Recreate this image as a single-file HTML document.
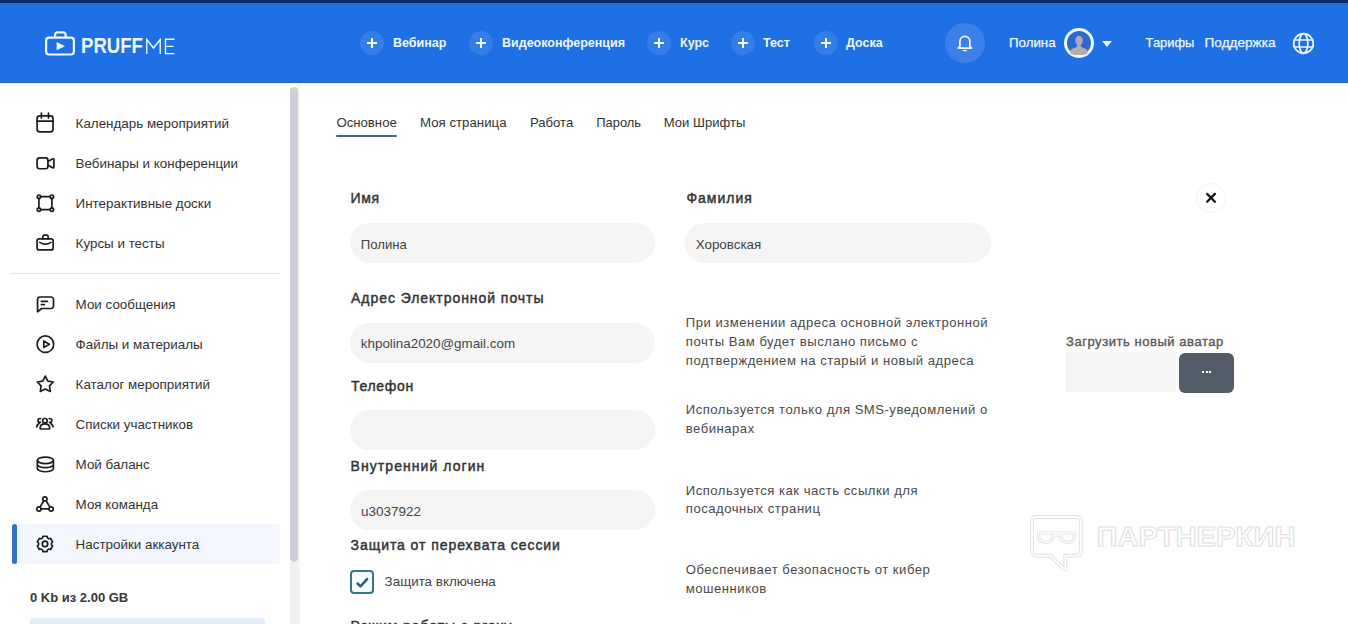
<!DOCTYPE html>
<html><head><meta charset="utf-8">
<style>
*{box-sizing:border-box;margin:0;padding:0}
html,body{width:1348px;height:624px;overflow:hidden;background:#fff;font-family:"Liberation Sans",sans-serif;color:#333}
.a{position:absolute;white-space:nowrap}
#topstrip{position:absolute;left:0;top:0;width:1348px;height:3px;background:#08296a}
#hdr{position:absolute;left:0;top:3px;width:1348px;height:80px;background:#1f6fe5;border-top:2px solid #2d6ccf}
.pc{position:absolute;width:24px;height:24px;border-radius:50%;background:rgba(255,255,255,.1);top:31px}
.pc:before,.pc:after{content:"";position:absolute;background:#f2faff;left:50%;top:50%}
.pc:before{width:10px;height:2.8px;margin-left:-5px;margin-top:-1.4px}
.pc:after{width:2.8px;height:10px;margin-left:-1.4px;margin-top:-5px}
.nt{position:absolute;font-size:12.5px;font-weight:700;color:#eef8ff;line-height:13px;top:37px;white-space:nowrap}
.ht{position:absolute;font-size:13.5px;font-weight:400;color:#eef8ff;-webkit-text-stroke:0.25px #eef8ff;line-height:14px;top:36px;white-space:nowrap}
.si{position:absolute;left:75.6px;font-size:13.4px;line-height:14px;color:#333;white-space:nowrap}
.ic{position:absolute;left:35px;width:21px;height:21px}
.tab{position:absolute;top:116px;font-size:13.2px;line-height:14px;color:#333;white-space:nowrap}
.lbl{position:absolute;font-size:14px;font-weight:400;line-height:15px;color:#333;-webkit-text-stroke:0.45px #333;white-space:nowrap}
.inp{position:absolute;height:40px;width:305px;border-radius:20px;background:#f5f5f5}
.it{position:absolute;font-size:13.4px;line-height:14px;color:#444;white-space:nowrap}
.help{position:absolute;left:685.8px;font-size:13.1px;line-height:18.9px;letter-spacing:0.5px;color:#4a4a4a;white-space:nowrap}
</style></head><body>
<div id="topstrip"></div>
<div id="hdr"></div>
<div class="a" style="left:0;top:82px;width:1348px;height:1px;background:#2c64ae"></div>
<div class="a" style="left:0;top:83px;width:1348px;height:1px;background:#dcfaff"></div>
<div class="a" style="left:0;top:84px;width:1348px;height:1px;background:#f2feff"></div>
<svg class="a" style="left:44px;top:30px" width="33" height="28" viewBox="0 0 33 28">
 <rect x="2.1" y="7.7" width="27.8" height="16.8" rx="3" fill="none" stroke="#eef8ff" stroke-width="2.2"/>
 <path d="M11.1 7.7V4.6a2.2 2.2 0 0 1 2.2-2.2h6.1a2.2 2.2 0 0 1 2.2 2.2V7.7" fill="none" stroke="#eef8ff" stroke-width="2.2"/>
 <path d="M12.6 12L21 16.15 12.6 20.3Z" fill="#eef8ff"/>
</svg>
<div class="a" style="left:80.5px;top:34.5px;font-size:22px;line-height:22px;font-weight:700;color:#eef8ff;transform:scaleX(.845);transform-origin:0 0">PRUFF</div>
<svg class="a" style="left:145px;top:38px" width="32" height="17" viewBox="0 0 32 17">
 <path d="M1.8 16V1.5L8.5 10 15.2 1.5V16" fill="none" stroke="#eef8ff" stroke-width="1.4" stroke-linejoin="miter"/>
 <path d="M29.5 1.2H20.5V15.6H29.5M20.5 8.4H28.5" fill="none" stroke="#eef8ff" stroke-width="1.4"/>
</svg>
<div class="pc" style="left:360px"></div><div class="nt" style="left:393px">Вебинар</div>
<div class="pc" style="left:469px"></div><div class="nt" style="left:502px">Видеоконференция</div>
<div class="pc" style="left:647px"></div><div class="nt" style="left:680px">Курс</div>
<div class="pc" style="left:731px"></div><div class="nt" style="left:763px">Тест</div>
<div class="pc" style="left:814px"></div><div class="nt" style="left:846px">Доска</div>
<div class="a" style="left:945px;top:23px;width:40px;height:40px;border-radius:50%;background:rgba(255,255,255,.12)"></div>
<svg class="a" style="left:955px;top:31px" width="20" height="22" viewBox="0 0 20 22">
 <path d="M3.3 17.1L4.9 15.2V10.3A5 5 0 0 1 14.9 10.3V15.2L16.5 17.1Z" fill="none" stroke="#eef8ff" stroke-width="1.8" stroke-linejoin="round"/>
 <path d="M7.9 19.6H11.9" stroke="#eef8ff" stroke-width="1.3"/>
</svg>
<div class="ht" style="left:1009px;font-size:13.3px">Полина</div>
<div class="a" style="left:1064px;top:28px;width:30px;height:30px;border-radius:50%;background:#eef8ff;overflow:hidden">
 <svg class="a" style="left:3px;top:3px" width="24" height="24" viewBox="0 0 24 24">
  <circle cx="12" cy="12" r="12" fill="#2d67cf"/>
  <ellipse cx="12" cy="9.6" rx="3.8" ry="4.9" fill="#a7acbb"/>
  <path d="M10.2 13H13.8L14 16Q19 17 21 20L20 23 12 25 4 23 3 20Q5 17 10 16Z" fill="#b2aeb0"/>
 </svg>
</div>
<svg class="a" style="left:1101px;top:40px" width="12" height="8" viewBox="0 0 12 8"><path d="M1 1h10L6 7z" fill="#eef8ff"/></svg>
<div class="ht" style="left:1145.6px;font-size:12.9px">Тарифы</div>
<div class="ht" style="left:1204.6px;font-size:13.6px">Поддержка</div>
<svg class="a" style="left:1292px;top:32px" width="24" height="24" viewBox="0 0 24 24">
 <g fill="none" stroke="#eef8ff" stroke-width="1.7">
 <circle cx="11.5" cy="11.5" r="9.8"/>
 <ellipse cx="11.5" cy="11.5" rx="4.3" ry="9.8"/>
 <path d="M1.7 8H21.3M1.7 15H21.3"/>
 </g>
</svg>
<!--SIDEBAR-->
<div class="a" style="left:14px;top:524px;width:265.5px;height:40px;border-radius:0 4px 4px 0;background:#f3f6fd"></div>
<div class="a" style="left:12px;top:524px;width:5px;height:40px;border-radius:3px;background:#3170cf"></div>
<div class="a" style="left:10px;top:273px;width:270px;height:1px;background:#e4e4e6"></div>
<svg class="a" style="left:30px;top:108px" width="30" height="30" viewBox="0 0 30 30" fill="none" stroke="#1c1c1c" stroke-width="1.7" stroke-linecap="round" stroke-linejoin="round"><rect x="7.1" y="7.9" width="15.9" height="16" rx="2.6"/><path d="M7.1 13.2H23M11.4 5.2V10M18.5 5.2V10"/></svg>
<div class="si" style="margin-top:1px;top:116px">Календарь мероприятий</div>
<svg class="a" style="left:30px;top:148px" width="30" height="30" viewBox="0 0 30 30" fill="none" stroke="#1c1c1c" stroke-width="1.7" stroke-linecap="round" stroke-linejoin="round"><rect x="7.1" y="9.95" width="10.8" height="10.8" rx="2.4"/><path d="M17.9 13.6L22.4 11Q23.9 10.3 23.9 11.8V18.9Q23.9 20.4 22.4 19.7L17.9 17.1"/></svg>
<div class="si" style="margin-top:1px;top:156px">Вебинары и конференции</div>
<svg class="a" style="left:30px;top:188px" width="30" height="30" viewBox="0 0 30 30" fill="none" stroke="#1c1c1c" stroke-width="1.7" stroke-linecap="round" stroke-linejoin="round"><circle cx="8.9" cy="8.7" r="1.7"/><circle cx="21.9" cy="8.7" r="1.7"/><circle cx="8.9" cy="21.6" r="1.7"/><circle cx="21.9" cy="21.6" r="1.7"/><path d="M10.6 8.7H20.2M10.6 21.6H20.2M8.9 10.4V19.9M21.9 10.4V19.9"/></svg>
<div class="si" style="margin-top:1px;top:196px">Интерактивные доски</div>
<svg class="a" style="left:30px;top:228px" width="30" height="30" viewBox="0 0 30 30" fill="none" stroke="#1c1c1c" stroke-width="1.7" stroke-linecap="round" stroke-linejoin="round"><rect x="7.1" y="10.95" width="16.05" height="11" rx="2"/><path d="M12.85 10.9V8.6Q12.85 7.1 14.35 7.1H16.65Q18.15 7.1 18.15 8.6V10.9M9.8 14.4Q15.4 17.9 21 14.4"/></svg>
<div class="si" style="margin-top:1px;top:236px">Курсы и тесты</div>
<svg class="a" style="left:30px;top:289px" width="30" height="30" viewBox="0 0 30 30" fill="none" stroke="#1c1c1c" stroke-width="1.7" stroke-linecap="round" stroke-linejoin="round"><path d="M7.55 22.8V10.5A2.5 2.5 0 0 1 10.05 8H21A2.5 2.5 0 0 1 23.5 10.5V17A2.5 2.5 0 0 1 21 19.5H11.6Z"/><path d="M11.4 12.3H17.4M11.4 15.6H14.3"/></svg>
<div class="si" style="margin-top:1px;top:297px">Мои сообщения</div>
<svg class="a" style="left:30px;top:329px" width="30" height="30" viewBox="0 0 30 30" fill="none" stroke="#1c1c1c" stroke-width="1.7" stroke-linecap="round" stroke-linejoin="round"><circle cx="15.4" cy="15.15" r="8.3"/><path d="M13.8 11.9V18.5L19.4 15.2Z"/></svg>
<div class="si" style="margin-top:1px;top:337px">Файлы и материалы</div>
<svg class="a" style="left:30px;top:369px" width="30" height="30" viewBox="0 0 30 30" fill="none" stroke="#1c1c1c" stroke-width="1.7" stroke-linecap="round" stroke-linejoin="round"><path d="M15.30 7.10 L17.89 12.04 L23.38 12.97 L19.48 16.96 L20.30 22.48 L15.30 20.00 L10.30 22.48 L11.12 16.96 L7.22 12.97 L12.71 12.04Z"/></svg>
<div class="si" style="margin-top:1px;top:377px">Каталог мероприятий</div>
<svg class="a" style="left:30px;top:409px" width="30" height="30" viewBox="0 0 30 30" fill="none" stroke="#1c1c1c" stroke-width="1.7" stroke-linecap="round" stroke-linejoin="round"><circle cx="10" cy="11.5" r="2"/><circle cx="19.8" cy="11.5" r="2"/><path d="M6.7 17.9Q7.2 14.9 10 14.3M23.1 17.9Q22.6 14.9 19.8 14.3"/><g stroke="#fff" stroke-width="3.6" fill="#fff"><circle cx="14.9" cy="11.8" r="2.3"/><path d="M10.1 19.3Q10.1 14.9 14.9 14.9Q19.7 14.9 19.7 19.3Q19.7 20 19 20H10.8Q10.1 20 10.1 19.3Z"/></g><circle cx="14.9" cy="11.8" r="2.3"/><path d="M10.1 19.3Q10.1 14.9 14.9 14.9Q19.7 14.9 19.7 19.3Q19.7 20 19 20H10.8Q10.1 20 10.1 19.3Z"/></svg>
<div class="si" style="margin-top:1px;top:417px">Списки участников</div>
<svg class="a" style="left:30px;top:449px" width="30" height="30" viewBox="0 0 30 30" fill="none" stroke="#1c1c1c" stroke-width="1.7" stroke-linecap="round" stroke-linejoin="round"><ellipse cx="15.4" cy="11.3" rx="8" ry="3.25"/><path d="M7.4 11.3V19.5A8 3.25 0 0 0 23.4 19.5V11.3M7.4 15.4A8 3.25 0 0 0 23.4 15.4"/></svg>
<div class="si" style="margin-top:1px;top:457px">Мой баланс</div>
<svg class="a" style="left:30px;top:489px" width="30" height="30" viewBox="0 0 30 30" fill="none" stroke="#1c1c1c" stroke-width="1.7" stroke-linecap="round" stroke-linejoin="round"><circle cx="14.9" cy="9.9" r="2.1"/><circle cx="8.9" cy="19.95" r="2.1"/><circle cx="21.15" cy="19.95" r="2.1"/><path d="M13.8 11.8L10 18.1M16 11.8L20 18.1M11 19.95H19.05"/></svg>
<div class="si" style="margin-top:1px;top:497px">Моя команда</div>
<svg class="a" style="left:30px;top:529px" width="30" height="30" viewBox="0 0 30 30" fill="none" stroke="#1c1c1c" stroke-width="1.7" stroke-linecap="round" stroke-linejoin="round"><path d="M12.96 7.27L17.04 7.27Q17.50 10.57 20.59 9.31L22.63 12.86Q20.00 14.90 22.63 16.94L20.59 20.49Q17.50 19.23 17.04 22.53L12.96 22.53Q12.50 19.23 9.41 20.49L7.37 16.94Q10.00 14.90 7.37 12.86L9.41 9.31Q12.50 10.57 12.96 7.27Z"/><circle cx="15" cy="14.9" r="2.7"/></svg>
<div class="si" style="margin-top:1px;top:537px">Настройки аккаунта</div>
<div class="a" style="left:290px;top:87px;width:8px;height:475px;border-radius:4px;background:#cdd0db"></div>
<div class="a" style="left:290px;top:562px;width:8px;height:62px;border-radius:0;background:#f2f2f4"></div>
<div class="a" style="left:298px;top:83px;width:2px;height:541px;background:#f3f3f8"></div>
<div class="a" style="left:30px;top:591px;font-size:13px;line-height:14px;font-weight:700;color:#383838">0 Kb из 2.00 GB</div>
<div class="a" style="left:30px;top:618px;width:235px;height:12px;border-radius:4px;background:#e4ecfa"></div>
<!--/SIDEBAR-->
<!--MAIN-->
<div class="lbl" style="left:350.6px;top:191.3px;letter-spacing:0.55px">Имя</div>
<div class="lbl" style="left:686.4px;top:191.3px;letter-spacing:1.0px">Фамилия</div>
<div class="lbl" style="left:351px;top:291.3px;letter-spacing:0.95px">Адрес Электронной почты</div>
<div class="lbl" style="left:351px;top:378.6px;letter-spacing:0.68px">Телефон</div>
<div class="lbl" style="left:350.6px;top:458.9px;letter-spacing:1.06px">Внутренний логин</div>
<div class="lbl" style="left:350.6px;top:538.1px;letter-spacing:0.93px">Защита от перехвата сессии</div>
<div class="lbl" style="left:350.6px;top:618.8px;letter-spacing:0.9px">Режим работы с proxy</div>
<div class="tab" style="left:336.4px;font-size:13.2px">Основное</div>
<div class="tab" style="left:420px;font-size:13.25px">Моя страница</div>
<div class="tab" style="left:530px;font-size:13.1px">Работа</div>
<div class="tab" style="left:596.2px;font-size:12.95px">Пароль</div>
<div class="tab" style="left:663.8px;font-size:13.05px">Мои Шрифты</div>
<div class="a" style="left:336px;top:135px;width:61px;height:2.2px;border-radius:1px;background:#4a6676"></div>
<div class="inp" style="left:350px;top:223px;width:305px"></div>
<div class="inp" style="left:685px;top:223px;width:306px"></div>
<div class="inp" style="left:350px;top:323px;width:305px"></div>
<div class="inp" style="left:350px;top:410px;width:305px"></div>
<div class="inp" style="left:350px;top:490px;width:305px"></div>
<div class="it" style="left:360.7px;top:237.9px;font-size:13.2px">Полина</div>
<div class="it" style="left:695.7px;top:237.9px;font-size:13.4px">Хоровская</div>
<div class="it" style="left:360.8px;top:336.6px;font-size:13.4px">khpolina2020@gmail.com</div>
<div class="it" style="left:361px;top:504.5px;font-size:13.5px">u3037922</div>
<div class="help" style="top:314.1px">При изменении адреса основной электронной<br>почты Вам будет выслано письмо с<br>подтверждением на старый и новый адреса</div>
<div class="help" style="top:400.8px">Используется только для SMS-уведомлений о<br>вебинарах</div>
<div class="help" style="top:481.5px">Используется как часть ссылки для<br>посадочных страниц</div>
<div class="help" style="top:561.0px">Обеспечивает безопасность от кибер<br>мошенников</div>
<div class="a" style="left:1196px;top:183px;width:30px;height:30px;border-radius:50%;border:1px solid #f3f3f3;background:#fff"></div>
<svg class="a" style="left:1204px;top:191px" width="14" height="14" viewBox="0 0 14 14"><path d="M3.1 2.9L10.9 10.7M10.9 2.9L3.1 10.7" stroke="#111" stroke-width="2.3" stroke-linecap="round"/></svg>
<div class="a" style="left:1066px;top:334.7px;font-size:13px;line-height:14px;font-weight:400;color:#5a5a5a;-webkit-text-stroke:0.4px #5a5a5a;letter-spacing:0.55px">Загрузить новый аватар</div>
<div class="a" style="left:1066px;top:352px;width:110px;height:40px;background:#f5f5f5"></div>
<div class="a" style="left:1179px;top:353px;width:55px;height:40px;border-radius:6px;background:#535c69"></div>
<div class="a" style="left:1202px;top:371px;width:2px;height:2px;background:#fff"></div><div class="a" style="left:1205.5px;top:371px;width:2px;height:2px;background:#fff"></div><div class="a" style="left:1209px;top:371px;width:2px;height:2px;background:#fff"></div>
<div class="a" style="left:350px;top:570px;width:24px;height:24px;border-radius:4px;border:2.4px solid #3a7487;background:#f4fcff"></div>
<svg class="a" style="left:350px;top:570px" width="24" height="24" viewBox="0 0 24 24"><path d="M7.6 13.5L10.5 16.4 17.1 9.1" fill="none" stroke="#2d5f7c" stroke-width="2.5" stroke-linecap="round" stroke-linejoin="round"/></svg>
<div class="it" style="left:384.6px;top:574.9px;font-size:13.4px">Защита включена</div>
<svg class="a" style="left:1025px;top:508px" width="280" height="70" viewBox="0 0 280 70">
 <path d="M11 9H51.7Q55.7 9 55.7 13V43.7Q55.7 47.7 51.7 47.7H40.3V59.5Q40.3 62.5 38.2 60.4L25.3 47.7H11Q7.1 47.7 7.1 43.7V13Q7.1 9 11 9Z" fill="none" stroke="#e2e2e2" stroke-width="3.8" stroke-linejoin="round"/>
 <path d="M11 9H51.7Q55.7 9 55.7 13V43.7Q55.7 47.7 51.7 47.7H40.3V59.5Q40.3 62.5 38.2 60.4L25.3 47.7H11Q7.1 47.7 7.1 43.7V13Q7.1 9 11 9Z" fill="none" stroke="#fff" stroke-width="1.8" stroke-linejoin="round"/>
 <path d="M13.5 25H49.5V27Q49.5 34.3 42.5 34.3Q35.5 34.3 35.5 27H28Q28 34.3 20.75 34.3Q13.5 34.3 13.5 27Z" fill="none" stroke="#e2e2e2" stroke-width="3.2" stroke-linejoin="round"/>
 <path d="M13.5 25H49.5V27Q49.5 34.3 42.5 34.3Q35.5 34.3 35.5 27H28Q28 34.3 20.75 34.3Q13.5 34.3 13.5 27Z" fill="none" stroke="#fff" stroke-width="1.3" stroke-linejoin="round"/>
 <text x="71.5" y="38" textLength="199" lengthAdjust="spacingAndGlyphs" font-family="Liberation Sans" font-weight="700" font-size="27" fill="#fff" stroke="#e0e0e0" stroke-width="1">ПАРТНЕРКИН</text>
</svg>
<!--/MAIN-->
</body></html>
